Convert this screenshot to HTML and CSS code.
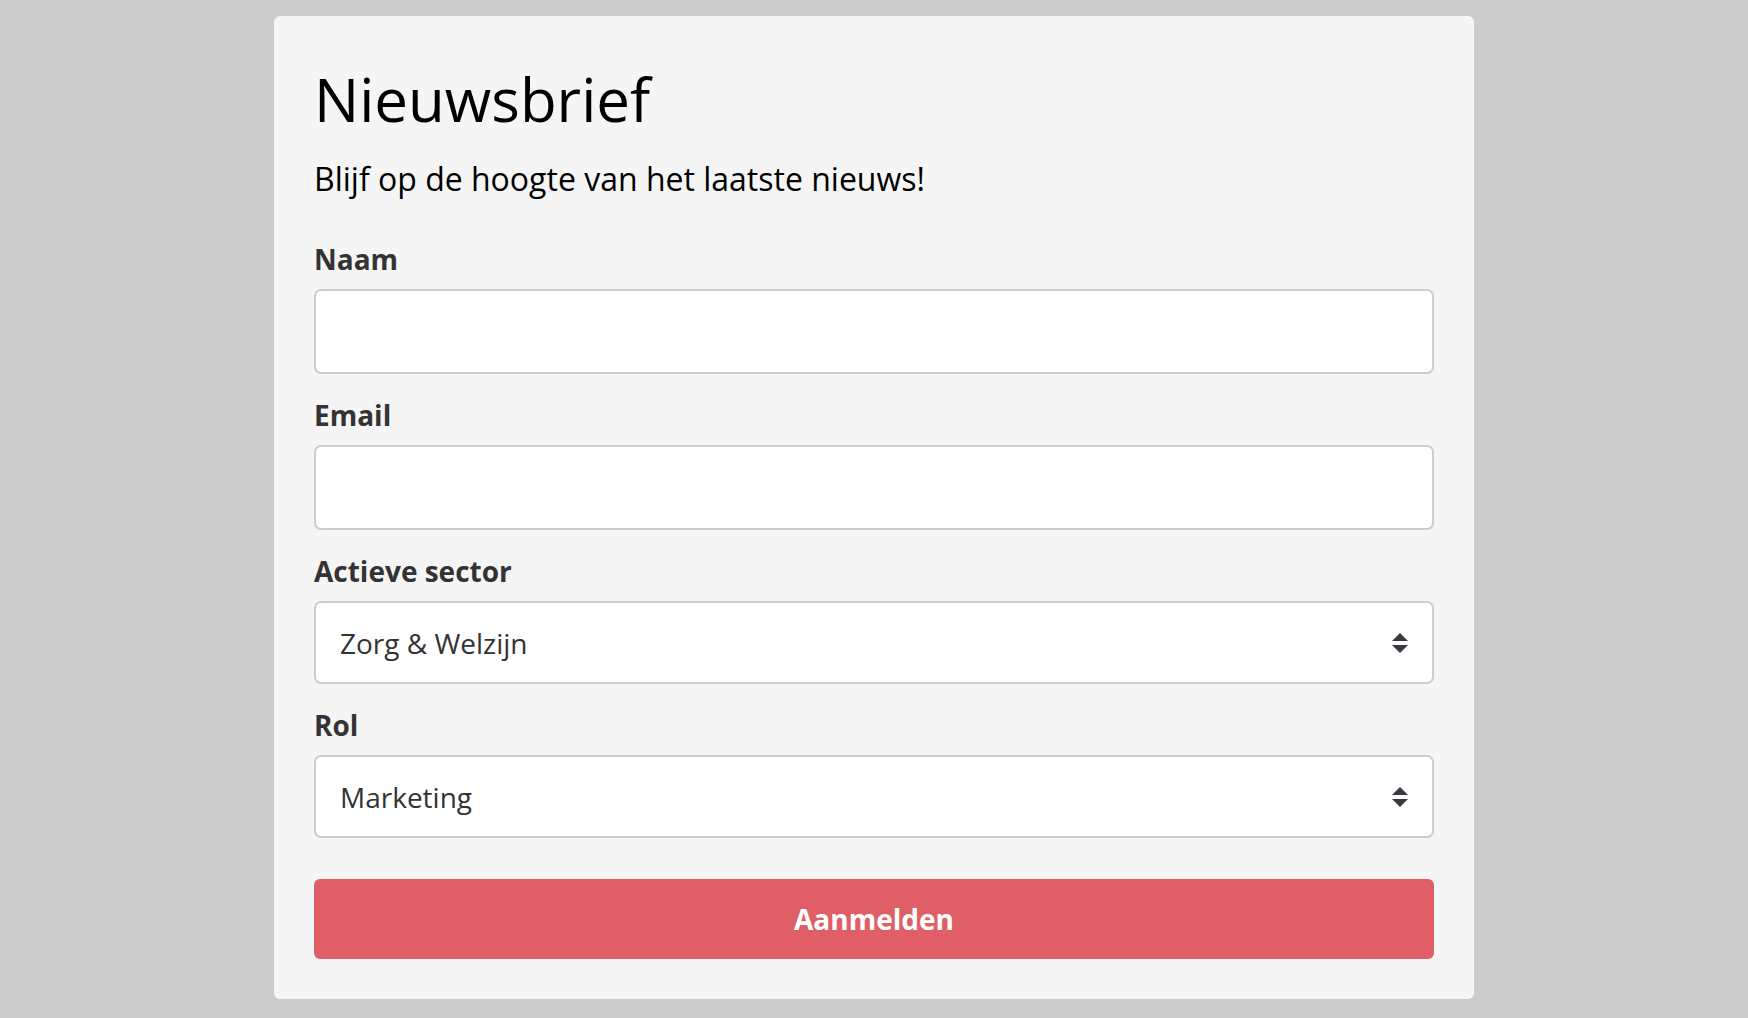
FILE: index.html
```html
<!DOCTYPE html>
<html lang="nl">
<head>
<meta charset="utf-8">
<title>Nieuwsbrief</title>
<link rel="stylesheet" href="styles.css">
</head>
<body>
<div class="card">
  <h1 class="title">Nieuwsbrief</h1>
  <p class="subtitle">Blijf op de hoogte van het laatste nieuws!</p>
  <form class="form">
    <div class="field">
      <label class="label" for="naam">Naam</label>
      <input class="input" id="naam" type="text">
    </div>
    <div class="field">
      <label class="label" for="email">Email</label>
      <input class="input" id="email" type="email">
    </div>
    <div class="field">
      <label class="label" for="sector">Actieve sector</label>
      <div class="select-wrap">
        <select class="select" id="sector">
          <option>Zorg &amp; Welzijn</option>
        </select>
        <svg class="select-arrow" width="16" height="20" viewBox="0 0 4 5"><path fill="#343a40" d="M2 0L0 2h4zm0 5L0 3h4z"/></svg>
      </div>
    </div>
    <div class="field">
      <label class="label" for="rol">Rol</label>
      <div class="select-wrap">
        <select class="select" id="rol">
          <option>Marketing</option>
        </select>
        <svg class="select-arrow" width="16" height="20" viewBox="0 0 4 5"><path fill="#343a40" d="M2 0L0 2h4zm0 5L0 3h4z"/></svg>
      </div>
    </div>
    <button class="button" type="button">Aanmelden</button>
  </form>
</div>
</body>
</html>
```

FILE: styles.css
```css
* { box-sizing: border-box; }
html, body { margin: 0; padding: 0; }
body {
  background: #cccccc;
  font-family: "Open Sans", "Noto Sans", sans-serif;
  min-height: 1018px;
}
.card {
  width: 1200px;
  margin: 16px auto 0;
  background: #f5f5f5;
  border-radius: 6px;
  padding: 45px 40px 40px;
}
.title {
  margin: 0 0 20px;
  font-size: 60px;
  line-height: 76px;
  font-weight: 400;
  color: #000;
}
.subtitle {
  margin: 0;
  font-size: 32px;
  line-height: 44px;
  color: #000;
}
.form {
  display: flex;
  flex-direction: column;
  margin-top: 38px;
}
.field {
  display: flex;
  flex-direction: column;
  margin-bottom: 21px;
}
.label {
  font-size: 28px;
  line-height: 40px;
  font-weight: 700;
  color: #333;
  margin-bottom: 10px;
}
.input {
  display: block;
  width: 100%;
  height: 85px;
  border: 2px solid #cdcdcd;
  border-radius: 7px;
  background: #fff;
  font-family: inherit;
  font-size: 28px;
  padding: 0 24px;
  color: #333;
  outline: none;
}
.select-wrap {
  position: relative;
}
.select {
  display: block;
  width: 100%;
  height: 83px;
  border: 2px solid #cdcdcd;
  border-radius: 7px;
  background: #fff;
  font-family: inherit;
  font-size: 28px;
  color: #333;
  padding: 0 56px 0 24px;
  -webkit-appearance: none;
  appearance: none;
  outline: none;
}
.select-arrow {
  position: absolute;
  right: 26px;
  top: 50%;
  margin-top: -10px;
  pointer-events: none;
}
.button {
  margin-top: 20px;
  height: 80px;
  width: 100%;
  border: none;
  border-radius: 6px;
  background: #e05f67;
  color: #fff;
  font-family: inherit;
  font-size: 28px;
  font-weight: 700;
  cursor: pointer;
}
```
